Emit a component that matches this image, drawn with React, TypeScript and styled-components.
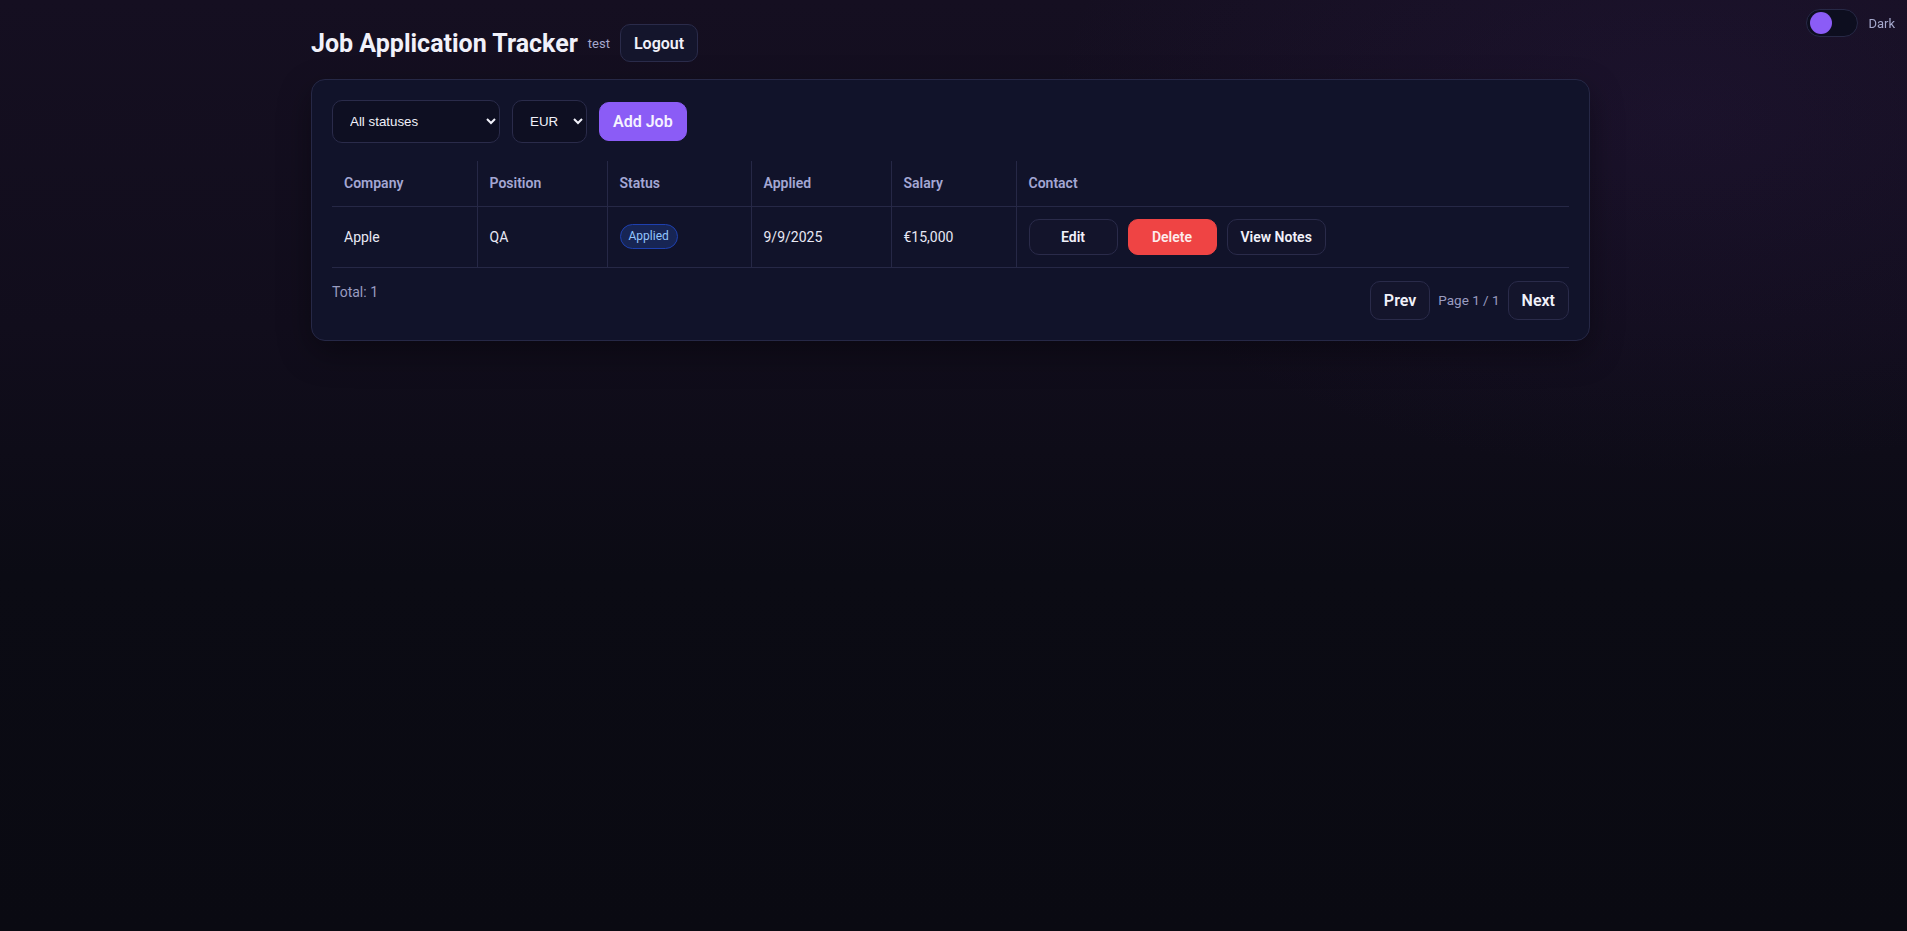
import React, { ChangeEvent, useState } from 'react';
import styled, { createGlobalStyle } from 'styled-components';

const GlobalStyle = createGlobalStyle`
  html, body {
    margin: 0;
    padding: 0;
    min-height: 100%;
    color-scheme: dark;
  }

  body {
    font-family: "Segoe UI", Roboto, "Noto Sans", sans-serif;
    background:
      radial-gradient(900px 520px at 88% 12%, rgba(80, 44, 130, 0.12), transparent 70%),
      linear-gradient(180deg, #150f21 0%, #110d1c 35%, #0b0b14 62%, #0a0a12 100%);
    background-attachment: fixed;
    color: #f1f1fa;
  }

  * {
    box-sizing: border-box;
  }
`;

const Page = styled.div`
  min-height: 100vh;
  padding: 24px 6px 40px 0;
`;

const Shell = styled.main`
  width: 1279px;
  margin: 0 auto;
`;

const TopBar = styled.header`
  display: flex;
  align-items: center;
  gap: 10px;
  height: 38px;
  margin-bottom: 17px;
`;

const Title = styled.h1`
  margin: 0;
  font-size: 25px;
  font-weight: 700;
  color: #f1f1fa;
`;

const UserName = styled.span`
  font-size: 13px;
  color: #a5a8cc;
`;

const GhostButton = styled.button`
  height: ${({ $height }: { $height?: number }) => $height || 38}px;
  padding: 0 13px;
  border-radius: 10px;
  border: 1px solid #2a2b4a;
  background: #14152c;
  color: #f1f1fa;
  font-family: inherit;
  font-size: 16px;
  font-weight: 600;
  cursor: pointer;
`;

const ThemeToggle = styled.label`
  position: fixed;
  top: 9px;
  right: 12px;
  display: flex;
  align-items: center;
  gap: 10px;
  font-size: 13px;
  color: #a5a8cc;
  cursor: pointer;
`;

const Track = styled.span`
  display: flex;
  align-items: center;
  justify-content: ${({ $on }: { $on: boolean }) => ($on ? 'flex-start' : 'flex-end')};
  width: 52px;
  height: 28px;
  padding: 0 3px;
  border-radius: 14px;
  border: 1px solid #272946;
  background: #0d0e1f;
`;

const Knob = styled.span`
  width: 22px;
  height: 22px;
  border-radius: 50%;
  background: #8b5cf6;
`;

const Card = styled.section`
  background: #11132a;
  border: 1px solid #262846;
  border-radius: 14px;
  padding: 20px;
  box-shadow: 0 12px 32px rgba(0, 0, 0, 0.35);
`;

const Toolbar = styled.div`
  display: flex;
  align-items: center;
  gap: 12px;
  margin-bottom: 18px;
`;

const Select = styled.select`
  width: ${({ $width }: { $width: number }) => $width}px;
  height: 43px;
  padding: 0 8px 0 13px;
  border-radius: 10px;
  border: 1px solid #2a2b4a;
  background: #0e0f22;
  color: #f1f1fa;
  font-family: "Liberation Sans", Arial, sans-serif;
  font-size: 13.33px;
`;

const PrimaryButton = styled.button`
  height: 39px;
  padding: 0 13px;
  border-radius: 10px;
  border: 1px solid #8b5cf6;
  background: #8b5cf6;
  color: #f5f2ff;
  font-family: inherit;
  font-size: 16px;
  font-weight: 600;
  cursor: pointer;
`;

const Table = styled.table`
  width: 100%;
  border-collapse: collapse;
  table-layout: fixed;
`;

const Th = styled.th`
  height: 45px;
  padding: 0 12px;
  text-align: left;
  font-size: 14px;
  font-weight: 600;
  color: #a4a7d4;
  border-bottom: 1px solid #262846;
  border-right: 1px solid #262846;

  &:last-child {
    border-right: none;
  }
`;

const Td = styled.td`
  height: 61px;
  padding: 0 12px;
  font-size: 14px;
  color: #e8e8f4;
  border-bottom: 1px solid #262846;
  border-right: 1px solid #262846;

  &:last-child {
    border-right: none;
  }
`;

const Badge = styled.span`
  display: inline-block;
  padding: 2px 8px;
  border-radius: 999px;
  border: 1px solid #1e40af;
  background: #172554;
  color: #93c5fd;
  font-size: 12px;
  line-height: 19px;
`;

const Actions = styled.div`
  display: flex;
  gap: 10px;
`;

type Variant = 'default' | 'danger';

const ActionButton = styled.button<{ $variant?: Variant }>`
  min-width: 89px;
  height: 36px;
  padding: 0 13px;
  border-radius: 10px;
  border: 1px solid ${({ $variant }) => ($variant === 'danger' ? '#ef4444' : '#2a2b4a')};
  background: ${({ $variant }) => ($variant === 'danger' ? '#ef4444' : '#13142b')};
  color: ${({ $variant }) => ($variant === 'danger' ? '#fdecec' : '#f1f1fa')};
  font-family: inherit;
  font-size: 14px;
  font-weight: 600;
  cursor: pointer;
`;

const Footer = styled.div`
  display: flex;
  justify-content: space-between;
  align-items: flex-start;
  margin-top: 13px;
`;

const Total = styled.div`
  padding-top: 1px;
  font-size: 14px;
  line-height: 20px;
  color: #9a9cc0;
`;

const Pager = styled.div`
  display: flex;
  align-items: center;
  gap: 8px;
`;

const PageInfo = styled.span`
  font-size: 13.5px;
  color: #9a9cc0;
`;

const columns = [
  { label: 'Company', width: 145 },
  { label: 'Position', width: 130 },
  { label: 'Status', width: 144 },
  { label: 'Applied', width: 140 },
  { label: 'Salary', width: 125 },
  { label: 'Contact' },
];

const jobs = [
  { id: 1, company: 'Apple', position: 'QA', status: 'Applied', applied: '9/9/2025', salary: '€15,000' },
];

const App = () => {
  const [dark, setDark] = useState(true);
  const [status, setStatus] = useState('all');
  const [currency, setCurrency] = useState('EUR');

  return (
    <>
      <GlobalStyle />
      <Page>
        <ThemeToggle onClick={() => setDark(!dark)}>
          <Track $on={dark}>
            <Knob />
          </Track>
          Dark
        </ThemeToggle>
        <Shell>
          <TopBar>
            <Title>Job Application Tracker</Title>
            <UserName>test</UserName>
            <GhostButton>Logout</GhostButton>
          </TopBar>
          <Card>
            <Toolbar>
              <Select
                $width={168}
                value={status}
                onChange={(e: ChangeEvent<HTMLSelectElement>) => setStatus(e.currentTarget.value)}
              >
                <option value="all">All statuses</option>
                <option value="applied">Applied</option>
                <option value="interview">Interview</option>
                <option value="offer">Offer</option>
                <option value="rejected">Rejected</option>
              </Select>
              <Select
                $width={75}
                value={currency}
                onChange={(e: ChangeEvent<HTMLSelectElement>) => setCurrency(e.currentTarget.value)}
              >
                <option value="EUR">EUR</option>
                <option value="USD">USD</option>
                <option value="GBP">GBP</option>
              </Select>
              <PrimaryButton>Add Job</PrimaryButton>
            </Toolbar>
            <Table>
              <colgroup>
                {columns.map((col) => (
                  <col key={col.label} style={col.width ? { width: col.width } : undefined} />
                ))}
              </colgroup>
              <thead>
                <tr>
                  {columns.map((col) => (
                    <Th key={col.label}>{col.label}</Th>
                  ))}
                </tr>
              </thead>
              <tbody>
                {jobs.map((job) => (
                  <tr key={job.id}>
                    <Td>{job.company}</Td>
                    <Td>{job.position}</Td>
                    <Td>
                      <Badge>{job.status}</Badge>
                    </Td>
                    <Td>{job.applied}</Td>
                    <Td>{job.salary}</Td>
                    <Td>
                      <Actions>
                        <ActionButton>Edit</ActionButton>
                        <ActionButton $variant="danger">Delete</ActionButton>
                        <ActionButton>View Notes</ActionButton>
                      </Actions>
                    </Td>
                  </tr>
                ))}
              </tbody>
            </Table>
            <Footer>
              <Total>Total: {jobs.length}</Total>
              <Pager>
                <GhostButton $height={39}>Prev</GhostButton>
                <PageInfo>Page 1 / 1</PageInfo>
                <GhostButton $height={39}>Next</GhostButton>
              </Pager>
            </Footer>
          </Card>
        </Shell>
      </Page>
    </>
  );
};

export default App;
